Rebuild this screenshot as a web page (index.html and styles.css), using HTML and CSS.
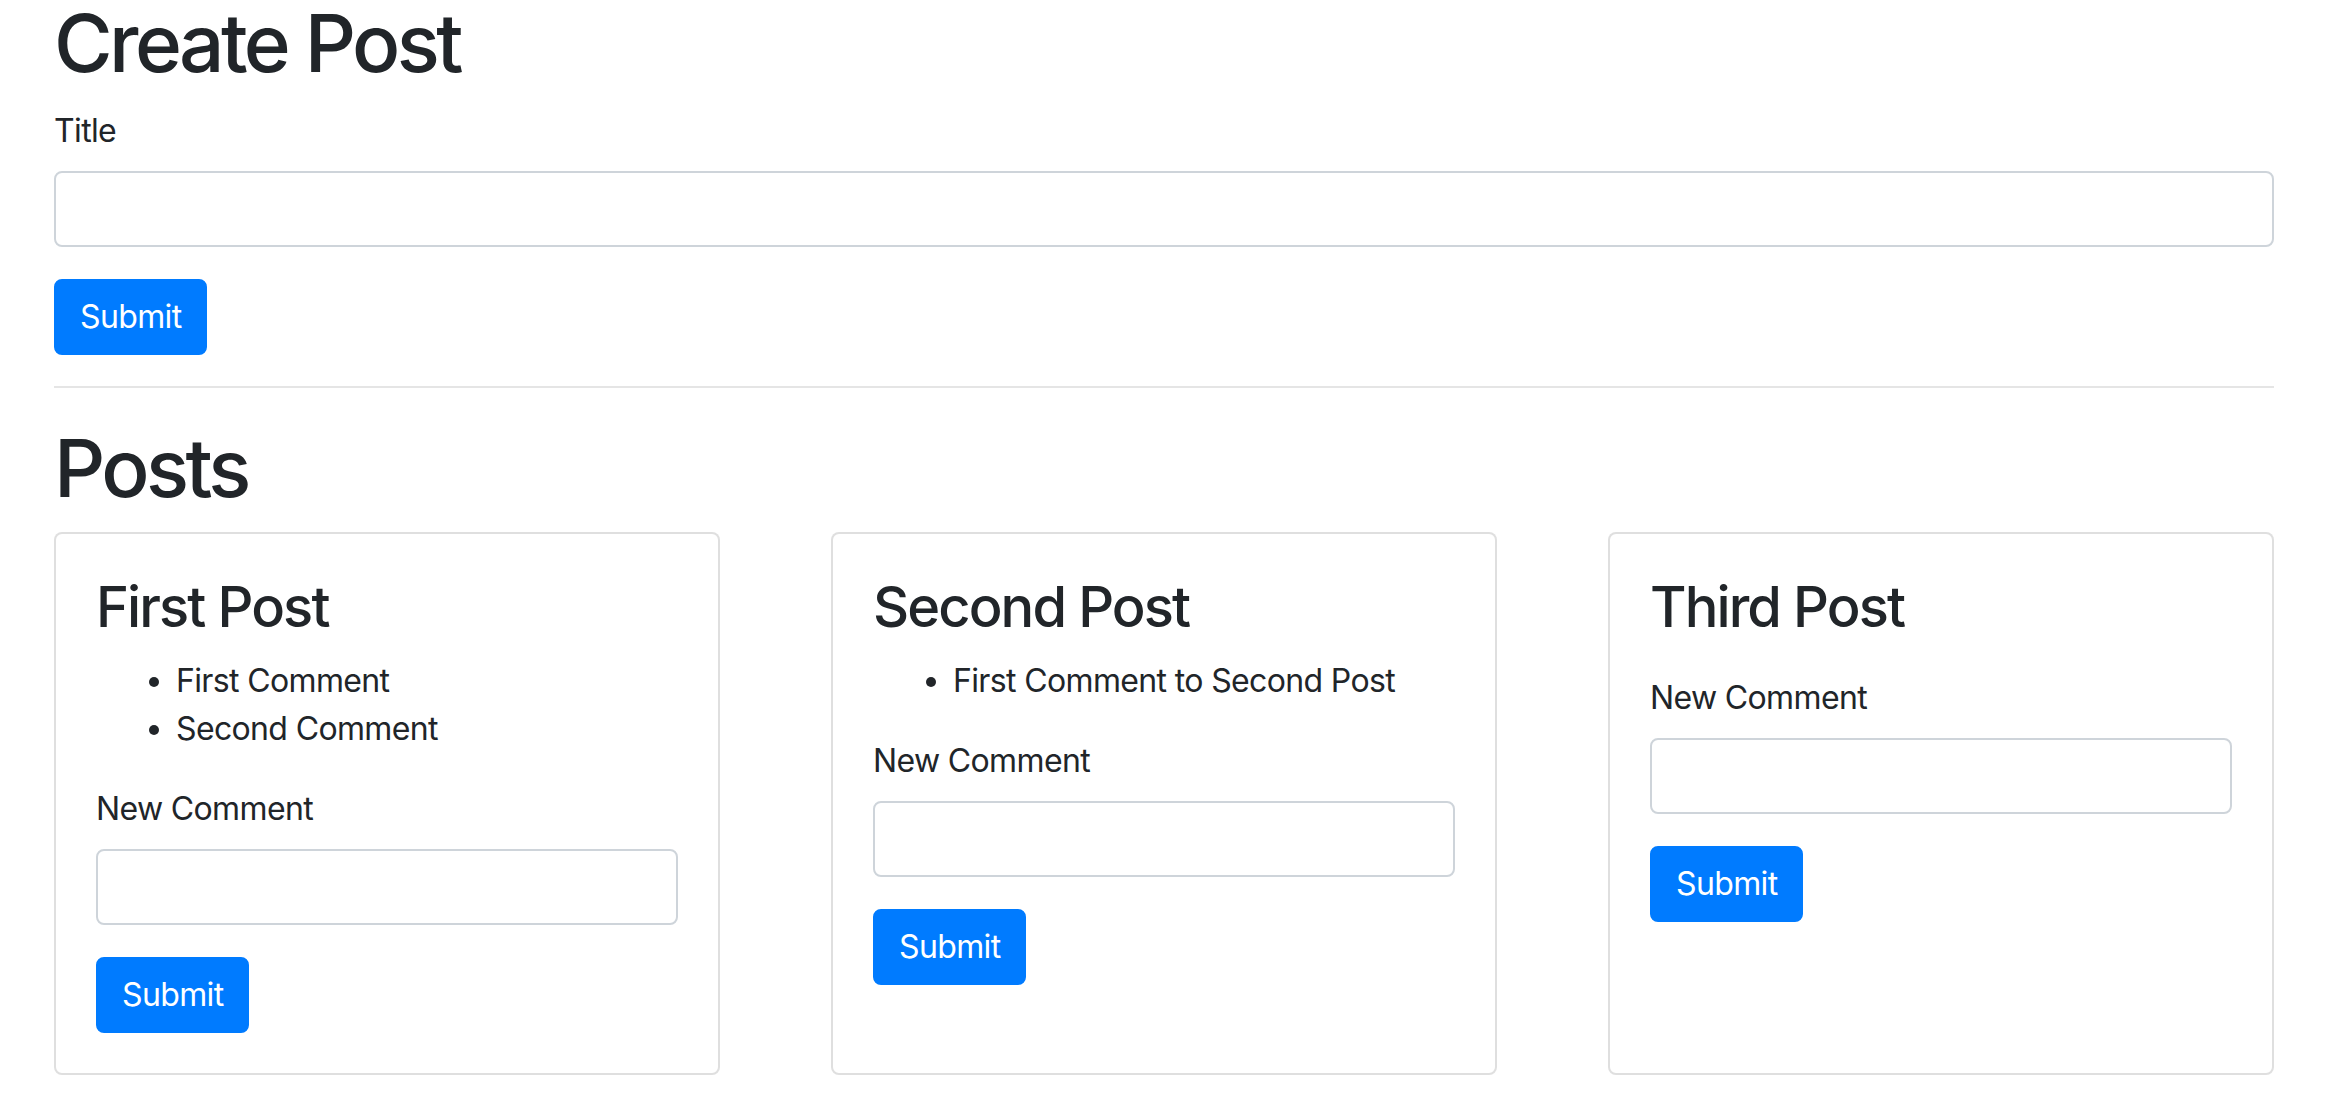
FILE: index.html
```html
<!DOCTYPE html>
<html lang="en">
<head>
<meta charset="utf-8">
<title>Posts</title>
<link rel="stylesheet" href="styles.css">
</head>
<body>
<main class="page">
  <h1 class="page-title">Create Post</h1>
  <form class="post-form">
    <div class="form-group">
      <label class="field-label" for="title">Title</label>
      <input class="text-input" id="title" type="text">
    </div>
    <button class="btn" type="button">Submit</button>
  </form>
  <hr class="divider">
  <h1 class="page-title">Posts</h1>
  <section class="posts">
    <article class="card">
      <h3 class="card-title">First Post</h3>
      <ul class="comments">
        <li>First Comment</li>
        <li>Second Comment</li>
      </ul>
      <form class="post-form">
        <div class="form-group">
          <label class="field-label" for="c1">New Comment</label>
          <input class="text-input" id="c1" type="text">
        </div>
        <button class="btn" type="button">Submit</button>
      </form>
    </article>
    <article class="card">
      <h3 class="card-title">Second Post</h3>
      <ul class="comments">
        <li>First Comment to Second Post</li>
      </ul>
      <form class="post-form">
        <div class="form-group">
          <label class="field-label" for="c2">New Comment</label>
          <input class="text-input" id="c2" type="text">
        </div>
        <button class="btn" type="button">Submit</button>
      </form>
    </article>
    <article class="card">
      <h3 class="card-title">Third Post</h3>
      <ul class="comments comments-empty"></ul>
      <form class="post-form">
        <div class="form-group">
          <label class="field-label" for="c3">New Comment</label>
          <input class="text-input" id="c3" type="text">
        </div>
        <button class="btn" type="button">Submit</button>
      </form>
    </article>
  </section>
</main>
</body>
</html>
```

FILE: styles.css
```css
* {
  box-sizing: border-box;
}

html, body {
  margin: 0;
  background: #ffffff;
}

body {
  font-family: Inter, "Liberation Sans", sans-serif;
  font-size: 32px;
  line-height: 48px;
  letter-spacing: -0.64px;
  color: #212529;
}

.page {
  padding: 0 64px 0 54px;
}

.page-title {
  font-size: 80px;
  line-height: 86px;
  font-weight: 500;
  letter-spacing: -3.6px;
  margin: 0 0 21px;
}

.post-form {
  margin: 0;
}

.form-group {
  margin-bottom: 32px;
}

.field-label {
  display: block;
  margin-bottom: 16px;
}

.text-input {
  display: block;
  width: 100%;
  height: 76px;
  border: 2px solid #ced4da;
  border-radius: 8px;
  background: #ffffff;
  font: inherit;
  padding: 12px 24px;
}

.btn {
  display: inline-block;
  font: inherit;
  letter-spacing: -0.64px;
  line-height: 48px;
  color: #ffffff;
  background: #007bff;
  border: 2px solid #007bff;
  border-radius: 8px;
  padding: 12px 24px;
  cursor: pointer;
}

.divider {
  border: 0;
  border-top: 2px solid rgba(0, 0, 0, 0.1);
  margin: 31px 0 37px;
}

.posts {
  display: grid;
  grid-template-columns: repeat(3, 1fr);
  column-gap: 111px;
}

.card {
  border: 2px solid rgba(0, 0, 0, 0.125);
  border-radius: 8px;
  padding: 40px;
  background: #ffffff;
}

.card-title {
  font-size: 56px;
  line-height: 67px;
  font-weight: 500;
  letter-spacing: -1.9px;
  margin: 0 0 16px;
}

.comments {
  margin: 0 0 32px;
  padding-left: 80px;
}

.comments-empty {
  margin-bottom: 33px;
}
```
